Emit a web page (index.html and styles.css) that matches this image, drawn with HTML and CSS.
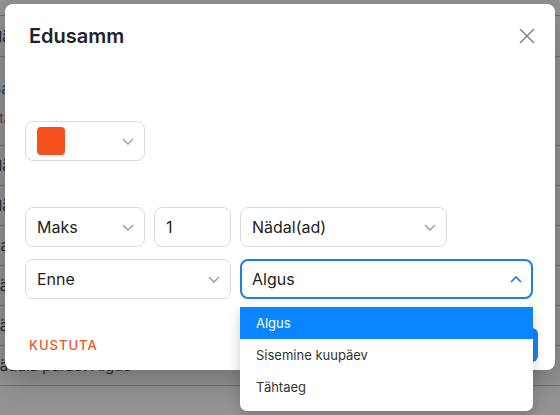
FILE: index.html
```html
<!DOCTYPE html>
<html lang="et">
<head>
<meta charset="utf-8">
<link rel="stylesheet" href="styles.css">
</head>
<body>
<div class="page">
  <div class="topbar"></div>
  <div class="prow first"><span class="ptext">Nädala kokkuvõte</span></div>
  <div class="phead">
    <div class="plink">Sammud</div>
    <div class="psub">Staatus</div>
  </div>
  <div class="prow"><span class="ptext">Nädala algus</span></div>
  <div class="prow"><span class="ptext">Nädala lõpp</span></div>
  <div class="prow"><span class="ptext">Paus</span></div>
  <div class="prow"><span class="ptext">nädala pärast</span></div>
  <div class="prow"><span class="ptext">nädala pärast</span></div>
  <div class="prow"><span class="ptext">nädala pärast Algus</span></div>
</div>

<div class="overlay">
  <div class="modal">
    <div class="modal-head">
      <h2 class="title">Edusamm</h2>
      <button class="close" aria-label="Sulge">
        <svg width="16" height="16" viewBox="0 0 16 16"><path d="M1 1L15 15M15 1L1 15" stroke="#8a8a8a" stroke-width="1.6" fill="none"/></svg>
      </button>
    </div>

    <div class="field color-field">
      <span class="swatch"></span>
      <svg class="chev" width="12" height="7" viewBox="0 0 12 7"><path d="M1 1l5 5 5-5" stroke="#9a9a9a" stroke-width="1.4" fill="none"/></svg>
    </div>

    <div class="grid row1">
      <div class="field"><span>Maks</span>
        <svg class="chev" width="12" height="7" viewBox="0 0 12 7"><path d="M1 1l5 5 5-5" stroke="#9a9a9a" stroke-width="1.4" fill="none"/></svg></div>
      <div class="field"><span>1</span></div>
      <div class="field"><span>Nädal(ad)</span>
        <svg class="chev" width="12" height="7" viewBox="0 0 12 7"><path d="M1 1l5 5 5-5" stroke="#9a9a9a" stroke-width="1.4" fill="none"/></svg></div>
    </div>

    <div class="grid row2">
      <div class="field"><span>Enne</span>
        <svg class="chev" width="12" height="7" viewBox="0 0 12 7"><path d="M1 1l5 5 5-5" stroke="#9a9a9a" stroke-width="1.4" fill="none"/></svg></div>
      <div class="field focused"><span>Algus</span>
        <svg class="chev" width="12" height="7" viewBox="0 0 12 7"><path d="M1 6l5-5 5 5" stroke="#1a7fe6" stroke-width="1.7" fill="none"/></svg></div>
    </div>

    <div class="footer">
      <button class="danger">KUSTUTA</button>
      <button class="primary">SALVESTA</button>
    </div>
  </div>

  <ul class="menu">
    <li class="item active">Algus</li>
    <li class="item">Sisemine kuupäev</li>
    <li class="item">Tähtaeg</li>
  </ul>
</div>
</body>
</html>
```

FILE: styles.css
```css
html, body {
  margin: 0;
  padding: 0;
}
body {
  width: 560px;
  height: 415px;
  overflow: hidden;
  position: relative;
  background: #fff;
  font-family: Inter, "Noto Sans", sans-serif;
}

/* underlying page */
.page {
  margin-left: -9px;
}
.topbar {
  height: 16px;
  box-sizing: border-box;
  border-bottom: 1px solid #c8c8c8;
}
.prow {
  height: 40px;
  box-sizing: border-box;
  border-bottom: 1px solid #c8c8c8;
  display: flex;
  align-items: center;
  font-size: 15px;
  color: #444;
}
.prow.first {
  height: 41px;
}
.phead {
  height: 89px;
  box-sizing: border-box;
  border-bottom: 1px solid #c8c8c8;
  display: flex;
  flex-direction: column;
  justify-content: center;
  gap: 12px;
}
.plink {
  font-size: 16px;
  color: #1f6fc7;
  margin-top: 2px;
}
.psub {
  font-size: 13px;
  color: #777;
}

.overlay {
  position: absolute;
  inset: 0;
  background: rgba(0, 0, 0, 0.42);
  padding: 4px 5px;
}

.modal {
  width: 550px;
  height: 366px;
  box-sizing: border-box;
  background: #fff;
  border-radius: 8px;
  padding: 20px 22px 0 20px;
  box-shadow: 0 10px 30px rgba(0, 0, 0, 0.25);
}
.modal-head {
  display: flex;
  justify-content: space-between;
  align-items: center;
  height: 24px;
}
.title {
  margin: 0 0 0 4px;
  font-size: 20px;
  line-height: 24px;
  font-weight: 600;
  color: #22222e;
}
.close {
  width: 24px;
  height: 24px;
  margin-right: -6px;
  padding: 0;
  border: 0;
  background: none;
  display: flex;
  align-items: center;
  justify-content: center;
}

.field {
  box-sizing: border-box;
  height: 40px;
  border: 1px solid #dcdcdc;
  border-radius: 8px;
  display: flex;
  align-items: center;
  justify-content: space-between;
  padding: 0 10px 0 11px;
  font-size: 16px;
  color: #222;
}
.field.focused {
  border: 2px solid #1a7fe6;
  padding: 0 9px 0 10px;
}
.color-field {
  width: 120px;
  margin-top: 73px;
  padding-left: 11px;
}
.swatch {
  width: 28px;
  height: 28px;
  border-radius: 4px;
  background: #f4511e;
}

.grid {
  display: grid;
  gap: 9px;
}
.row1 {
  grid-template-columns: 120px 77px 207px;
  margin-top: 46px;
}
.row2 {
  grid-template-columns: 206px 293px;
  margin-top: 12px;
}

.footer {
  margin-top: 29px;
  height: 34px;
  display: flex;
  justify-content: space-between;
  align-items: center;
  margin-right: -5px;
}
.danger {
  border: 0;
  background: none;
  padding: 0 4px;
  font-family: Inter, sans-serif;
  font-size: 13px;
  font-weight: 500;
  letter-spacing: 1px;
  color: #e8582b;
}
.primary {
  width: 100px;
  height: 34px;
  border: 0;
  border-radius: 6px;
  background: #1a82f0;
  color: #fff;
  font-family: Inter, sans-serif;
  font-size: 13px;
  font-weight: 500;
}

.menu {
  position: absolute;
  left: 240px;
  top: 307px;
  width: 293px;
  margin: 0;
  padding: 0 0 8px;
  list-style: none;
  background: #fff;
  border-radius: 0 0 7px 7px;
  box-shadow: 0 6px 14px rgba(0, 0, 0, 0.18);
}
.item {
  height: 32px;
  line-height: 32px;
  padding-left: 16px;
  font-size: 13px;
  color: #333;
}
.item.active {
  background: #0a84ff;
  color: #fff;
}
```
